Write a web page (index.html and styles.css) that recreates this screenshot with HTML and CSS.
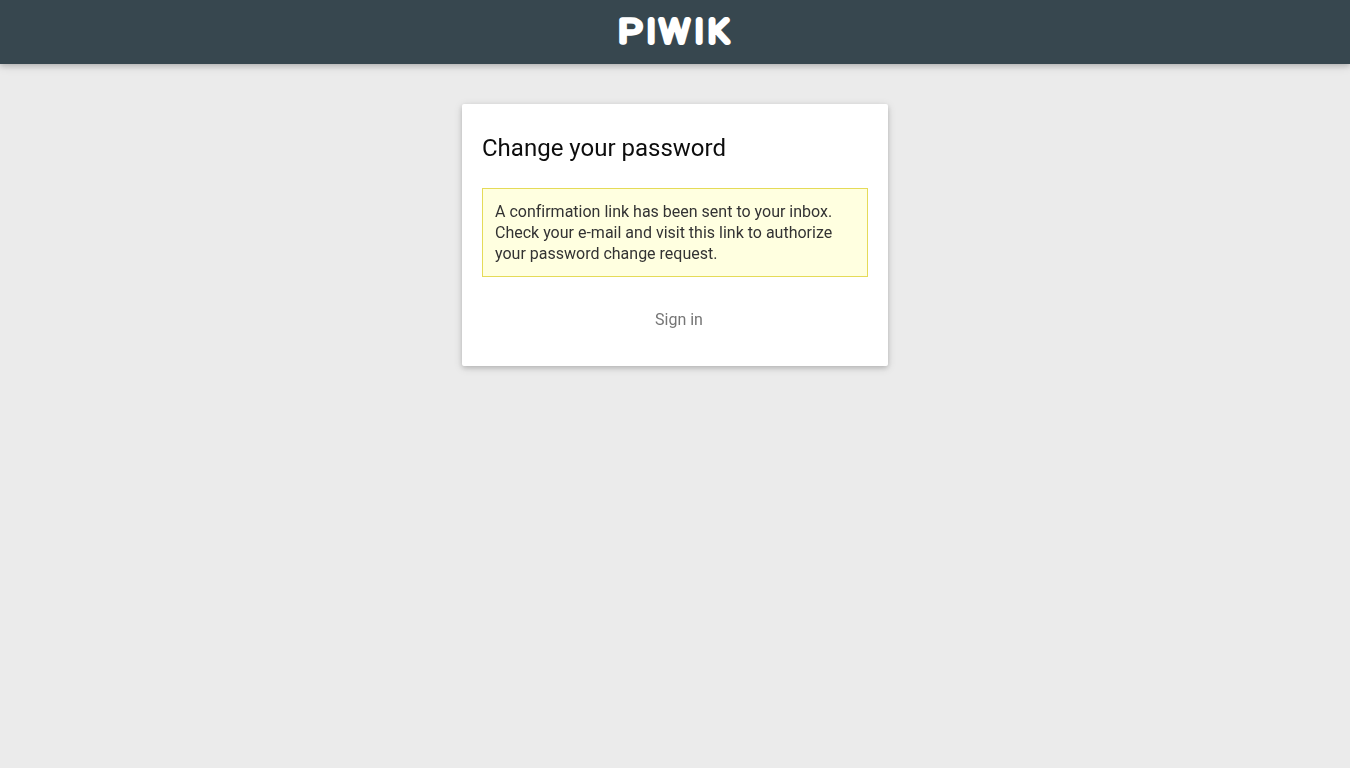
FILE: index.html
```html
<!DOCTYPE html>
<html lang="en">
<head>
<meta charset="utf-8">
<title>Change your password</title>
<link rel="stylesheet" href="styles.css">
</head>
<body>
<header class="navbar">
  <svg class="logo" width="114" height="32" viewBox="0 0 114 32" role="img" aria-label="Piwik">
    <text class="logo-text" transform="translate(.8 27.2) scale(1.2 1)">P</text>
    <text class="logo-text" x="29 42 77 90.6" y="27">IWIK</text>
  </svg>
</header>
<main class="card">
  <h1 class="title">Change your password</h1>
  <p class="notice">A confirmation link has been sent to your inbox. Check your e-mail and visit this link to authorize your password change request.</p>
  <nav class="nav"><a class="nav-link" href="#">Sign in</a></nav>
</main>
</body>
</html>
```
FILE: styles.css
```css
* { box-sizing: border-box; }
body {
  margin: 0;
  min-height: 100vh;
  background: #ebebeb;
  font-family: Roboto, "Liberation Sans", sans-serif;
  font-size: 16px;
  font-variant-ligatures: none;
}
.navbar {
  height: 64px;
  padding-top: 15px;
  display: flex;
  justify-content: center;
  align-items: flex-start;
  background: #37474f;
  box-shadow: 0 2px 5px 0 rgba(0,0,0,.16), 0 2px 10px 0 rgba(0,0,0,.12);
}
.logo { display: block; overflow: visible; }
.logo-text {
  font-family: Roboto, sans-serif;
  font-size: 32px;
  font-weight: 100;
  fill: #fff;
  stroke: #fff;
  stroke-width: 6px;
  stroke-linejoin: round;
  vector-effect: non-scaling-stroke;
}
.card {
  width: 426px;
  height: 262px;
  margin: 40px auto 0;
  padding: 28px 20px 0;
  background: #fff;
  border-radius: 2px;
  box-shadow: 0 2px 5px 0 rgba(0,0,0,.16), 0 2px 10px 0 rgba(0,0,0,.12);
  will-change: transform;
}
.title {
  margin: 0 0 24px;
  font-size: 24px;
  font-weight: 400;
  line-height: 32px;
  color: #0d0d0d;
}
.notice {
  margin: 0;
  padding: 12px;
  border: 1px solid #e5db58;
  background: #ffffe0;
  color: #333;
  line-height: 21px;
}
.nav {
  padding: 32px 0 0 8px;
  text-align: center;
  line-height: 21px;
}
.nav-link { color: #757575; text-decoration: none; }
```
